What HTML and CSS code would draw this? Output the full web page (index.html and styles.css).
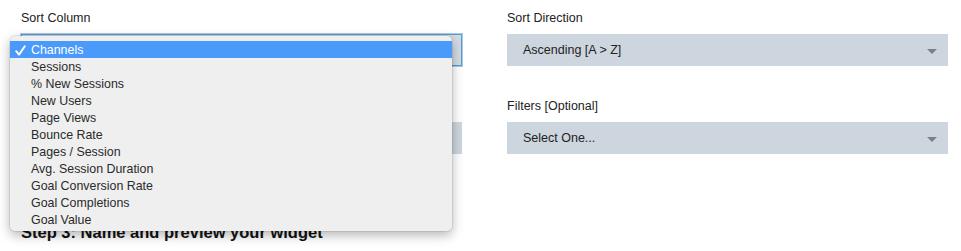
FILE: index.html
```html
<!DOCTYPE html>
<html>
<head>
<meta charset="utf-8">
<link rel="stylesheet" href="styles.css">
</head>
<body>
<div class="page">
  <div class="form">
    <div class="field">
      <div class="label">Sort Column</div>
      <div class="select focused"><span class="value">Channels</span><span class="arrow"></span></div>
    </div>
    <div class="field">
      <div class="label">Sort Direction</div>
      <div class="select"><span class="value">Ascending [A &gt; Z]</span><span class="arrow"></span></div>
    </div>
    <div class="field">
      <div class="label">&nbsp;</div>
      <div class="select"><span class="value"></span><span class="arrow"></span></div>
    </div>
    <div class="field">
      <div class="label">Filters [Optional]</div>
      <div class="select"><span class="value">Select One...</span><span class="arrow"></span></div>
    </div>
  </div>
  <h2 class="step">Step 3: Name and preview your widget</h2>

  <ul class="menu">
    <li class="item selected"><span class="check"><svg width="11" height="11" viewBox="0 0 11 11"><path d="M1.2 6.2 L4 9.6 L9.8 1.2" fill="none" stroke="#ffffff" stroke-width="1.9" stroke-linecap="round" stroke-linejoin="round"/></svg></span><span>Channels</span></li>
    <li class="item"><span class="check"></span><span>Sessions</span></li>
    <li class="item"><span class="check"></span><span>% New Sessions</span></li>
    <li class="item"><span class="check"></span><span>New Users</span></li>
    <li class="item"><span class="check"></span><span>Page Views</span></li>
    <li class="item"><span class="check"></span><span>Bounce Rate</span></li>
    <li class="item"><span class="check"></span><span>Pages / Session</span></li>
    <li class="item"><span class="check"></span><span>Avg. Session Duration</span></li>
    <li class="item"><span class="check"></span><span>Goal Conversion Rate</span></li>
    <li class="item"><span class="check"></span><span>Goal Completions</span></li>
    <li class="item"><span class="check"></span><span>Goal Value</span></li>
  </ul>
</div>
</body>
</html>
```

FILE: styles.css
```css
html, body {
  margin: 0;
  padding: 0;
  background: #ffffff;
}

body {
  font-family: "Liberation Sans", Arial, sans-serif;
  color: #222222;
  width: 961px;
  height: 251px;
  overflow: hidden;
}

.page {
  position: relative;
  padding: 10px 13px 0 21px;
}

.form {
  display: grid;
  grid-template-columns: 441px 441px;
  column-gap: 45px;
  row-gap: 32px;
}

.field {
  display: flex;
  flex-direction: column;
  gap: 8px;
}

.label {
  font-size: 12.5px;
  line-height: 16px;
  height: 16px;
  color: #222222;
}

.select {
  box-sizing: border-box;
  height: 32px;
  background: #cdd5de;
  display: flex;
  align-items: center;
  justify-content: space-between;
  padding: 0 11px 0 16px;
  font-size: 12.5px;
  color: #222222;
}

.select.focused {
  border: 1px solid #5a9bd0;
  box-shadow: 0 0 0 1px #a9cbe8;
  background: #d3dae2;
}

.arrow {
  width: 0;
  height: 0;
  border-left: 5px solid transparent;
  border-right: 5px solid transparent;
  border-top: 5px solid #7b8087;
  margin-top: 2px;
}

.step {
  margin: 68px 0 0 0;
  font-size: 16.5px;
  line-height: 20px;
  font-weight: bold;
  color: #111111;
}

.menu {
  position: absolute;
  left: 10px;
  top: 36px;
  width: 442px;
  margin: 0;
  padding: 5px 0 3px 0;
  list-style: none;
  background: #efefef;
  border-radius: 5px;
  box-shadow: 0 0 0 1px rgba(0, 0, 0, 0.07), 0 4px 12px rgba(0, 0, 0, 0.3);
  font-family: "Liberation Sans", Arial, sans-serif;
  font-size: 12.4px;
  color: #2a2a2a;
}

.item {
  box-sizing: border-box;
  display: flex;
  align-items: center;
  height: 17px;
  line-height: 16px;
  padding: 1px 0 0 5px;
}

.item.selected {
  background: #4a9afb;
  color: #ffffff;
}

.check {
  width: 16px;
  height: 16px;
  flex: none;
  display: flex;
  align-items: center;
}
```
